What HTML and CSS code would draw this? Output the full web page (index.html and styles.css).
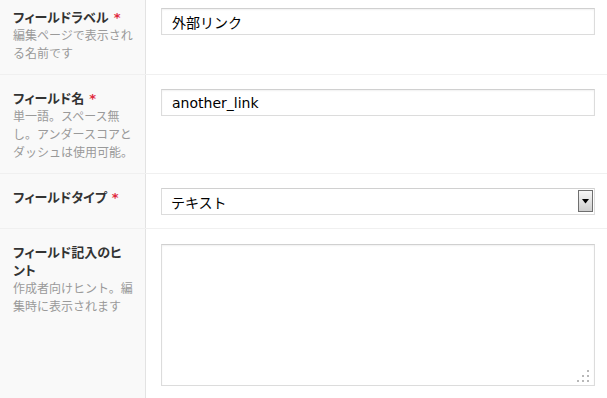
FILE: index.html
```html
<!DOCTYPE html>
<html lang="ja">
<head>
<meta charset="utf-8">
<title>フィールド設定</title>
<link rel="stylesheet" href="styles.css">
</head>
<body>
<div class="fields">
  <div class="field-row">
    <div class="label-cell">
      <div class="label">フィールドラベル <span class="req">*</span></div>
      <div class="desc">編集ページで表示され<br>る名前です</div>
    </div>
    <div class="input-cell">
      <input class="text-input" type="text" value="外部リンク">
    </div>
  </div>
  <div class="field-row">
    <div class="label-cell">
      <div class="label">フィールド名 <span class="req">*</span></div>
      <div class="desc">単一語。スペース無<br>し。アンダースコアと<br>ダッシュは使用可能。</div>
    </div>
    <div class="input-cell">
      <input class="text-input latin" type="text" value="another_link">
    </div>
  </div>
  <div class="field-row">
    <div class="label-cell">
      <div class="label">フィールドタイプ <span class="req">*</span></div>
    </div>
    <div class="input-cell">
      <div class="select-wrap">
        <select class="select-input">
          <option>テキスト</option>
        </select>
        <span class="select-btn"><svg width="9" height="5" viewBox="0 0 9 5"><path d="M1 0H8L4.5 4.5Z" fill="#000"/></svg></span>
      </div>
    </div>
  </div>
  <div class="field-row last">
    <div class="label-cell">
      <div class="label">フィールド記入のヒ<br>ント</div>
      <div class="desc">作成者向けヒント。編<br>集時に表示されます</div>
    </div>
    <div class="input-cell">
      <div class="area-wrap">
        <textarea class="area-input"></textarea>
        <svg class="grip" width="12" height="12" viewBox="0 0 12 12">
          <rect x="10" y="0" width="2" height="2" fill="#b8b8b8"/>
          <rect x="5" y="5" width="2" height="2" fill="#b8b8b8"/>
          <rect x="10" y="5" width="2" height="2" fill="#b8b8b8"/>
          <rect x="0" y="10" width="2" height="2" fill="#b8b8b8"/>
          <rect x="5" y="10" width="2" height="2" fill="#b8b8b8"/>
          <rect x="10" y="10" width="2" height="2" fill="#b8b8b8"/>
        </svg>
      </div>
    </div>
  </div>
</div>
</body>
</html>
```
FILE: styles.css
```css
html, body {
  margin: 0;
  padding: 0;
  background: #ffffff;
  overflow: hidden;
}
body {
  font-family: "Noto Sans CJK JP", "DejaVu Sans", sans-serif;
  color: #333333;
}
.fields {
  margin-top: -6px;
}
.field-row {
  display: grid;
  grid-template-columns: 146px 1fr;
  border-bottom: 1px solid #f0f0f0;
}
.label-cell {
  background: #f9f9f9;
  border-right: 1px solid #e3e3e3;
  padding: 14px 6px 12px 13px;
}
.label {
  font-size: 13px;
  line-height: 18px;
  height: auto;
  font-weight: bold;
  color: #333333;
  font-feature-settings: "palt";
}
.req {
  color: #e0283c;
  font-weight: bold;
  font-family: "DejaVu Sans", sans-serif;
  font-size: 13px;
  line-height: 0;
  margin-left: 2px;
}
.desc {
  font-size: 12px;
  line-height: 18px;
  color: #9a9a9a;
}
.input-cell {
  padding: 14px 12px 13px 15px;
}
.text-input {
  display: block;
  box-sizing: border-box;
  width: 100%;
  height: 27px;
  margin: 0;
  padding: 0 10px;
  border: 1px solid #dcdcdc;
  border-top-color: #d0d0d0;
  border-radius: 0;
  box-shadow: inset 0 1px 2px rgba(0, 0, 0, 0.06);
  background: #ffffff;
  font-family: "DejaVu Sans", "Noto Sans CJK JP", sans-serif;
  font-size: 14px;
  color: #000000;
  outline: none;
}
.select-wrap {
  position: relative;
}
.select-input {
  display: block;
  box-sizing: border-box;
  width: 100%;
  height: 27px;
  margin: 0;
  padding: 0 9px;
  border: 1px solid #dcdcdc;
  border-top-color: #d0d0d0;
  border-radius: 0;
  background: #ffffff;
  appearance: none;
  -webkit-appearance: none;
  font-family: "Noto Sans CJK JP", sans-serif;
  font-size: 14px;
  color: #000000;
  outline: none;
}
.select-btn {
  position: absolute;
  top: 2px;
  right: 2px;
  width: 15px;
  height: 22px;
  box-sizing: border-box;
  border: 1px solid #6f6f6f;
  background: linear-gradient(#f6f6f6, #cfcfcf);
  display: flex;
  align-items: center;
  justify-content: center;
}
.area-wrap {
  position: relative;
  padding-top: 1px;
}
.area-input {
  display: block;
  box-sizing: border-box;
  width: 100%;
  height: 142px;
  margin: 0;
  border: 1px solid #dcdcdc;
  border-top-color: #d0d0d0;
  border-radius: 0;
  box-shadow: inset 0 1px 2px rgba(0, 0, 0, 0.06);
  resize: none;
  outline: none;
  background: #ffffff;
}
.grip {
  position: absolute;
  right: 6px;
  bottom: 4px;
}
.last {
  min-height: 200px;
}
```
